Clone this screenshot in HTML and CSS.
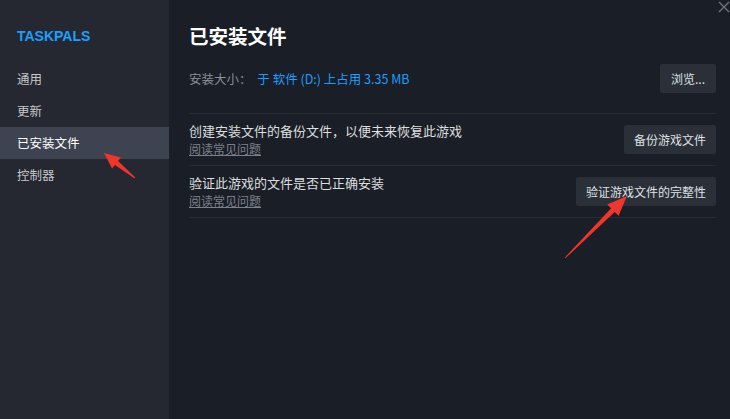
FILE: index.html
```html
<!DOCTYPE html>
<html lang="zh-CN">

<head>
	<meta charset="UTF-8">
	<meta name="viewport" content="width=device-width, initial-scale=1.0">
	<title>TASKPALS 属性</title>
	<link rel="stylesheet" href="styles.css">
</head>

<body>
	<div class="window">
		<aside class="sidebar">
			<div class="game-title">TASKPALS</div>
			<ul class="menu">
				<li>通用</li>
				<li>更新</li>
				<li class="active">已安装文件</li>
				<li>控制器</li>
			</ul>
		</aside>

		<main class="content">
			<h1 class="page-title">已安装文件</h1>

			<div class="size-row">
				<div class="size-info">
					<span class="label">安装大小：</span>
					<span class="value">于 软件 (D:) 上占用 3.35 MB</span>
				</div>
				<button class="btn">浏览...</button>
			</div>

			<div class="option-row">
				<div class="option-text">
					<p>创建安装文件的备份文件，以便未来恢复此游戏</p>
					<a href="#">阅读常见问题</a>
				</div>
				<button class="btn">备份游戏文件</button>
			</div>

			<div class="option-row">
				<div class="option-text">
					<p>验证此游戏的文件是否已正确安装</p>
					<a href="#">阅读常见问题</a>
				</div>
				<button class="btn">验证游戏文件的完整性</button>
			</div>
		</main>
	</div>

	<svg class="close" width="12" height="12" viewBox="0 0 12 12">
		<path d="M1 1 L11 11 M11 1 L1 11" stroke="#6d737d" stroke-width="1.4" fill="none" />
	</svg>

	<!-- annotation arrows -->
	<svg class="arrows" width="730" height="419" viewBox="0 0 730 419">
		<polygon fill="#f0352b"
			points="104,153 120.9,157.6 118.1,161.1 135.3,177.6 134.7,178.4 114.9,164.9 112.1,168.5" />
		<polygon fill="#f0352b"
			points="627,196 607.2,204.4 611.1,208.3 564.65,257.65 565.35,258.35 614.7,211.9 618.6,215.8" />
	</svg>
</body>

</html>
```

FILE: styles.css
```css
body {
	font-family: "Noto Sans CJK SC", "Noto Sans", sans-serif;
	margin: 0;
	padding: 0;
	background-color: #1a1e26;
	color: #dcdedf;
	width: 730px;
	height: 419px;
	overflow: hidden;
	position: relative;
}

.window {
	display: flex;
	height: 419px;
}

.sidebar {
	width: 169px;
	flex-shrink: 0;
	background-color: #252830;
	padding-top: 26px;
}

.game-title {
	font-family: "Liberation Sans", "Noto Sans", sans-serif;
	font-weight: bold;
	font-size: 14px;
	line-height: 20px;
	color: #1a9fff;
	padding-left: 17px;
	margin-bottom: 17px;
}

.menu {
	list-style: none;
	margin: 0;
	padding: 0;
}

.menu li {
	height: 32px;
	line-height: 32px;
	padding-left: 17px;
	font-size: 12.5px;
	color: #c4c7cc;
}

.menu li.active {
	background-color: #3d4350;
	color: #ffffff;
}

.content {
	flex: 1;
	padding: 22px 14px 0 20px;
}

.page-title {
	margin: 0 0 14px;
	font-size: 19.5px;
	line-height: 28px;
	font-weight: bold;
	color: #ffffff;
}

.size-row {
	display: flex;
	justify-content: space-between;
	align-items: center;
	height: 29px;
	margin-bottom: 20px;
}

.size-info {
	font-size: 12.5px;
	line-height: 17px;
}

.size-info .label {
	color: #8b9099;
	margin-right: 3px;
}

.size-info .value {
	color: #1a9fff;
}

.btn {
	font-family: inherit;
	font-size: 12px;
	height: 29px;
	padding: 0 10px;
	border: none;
	border-radius: 2px;
	background-color: #2b2f38;
	color: #dfe1e4;
}

.size-row .btn {
	padding: 0 11px;
}

.option-row {
	display: flex;
	justify-content: space-between;
	align-items: center;
	height: 29px;
	padding: 11px 0;
	border-top: 1px solid #272b33;
}

.option-row:last-child {
	border-bottom: 1px solid #272b33;
}

.option-text p {
	margin: 0;
	font-size: 13px;
	line-height: 16px;
	height: 16px;
	color: #dcdedf;
}

.option-text a {
	display: block;
	margin-top: 1px;
	font-size: 12px;
	line-height: 17px;
	height: 17px;
	color: #7b818b;
}

.close {
	position: absolute;
	top: 1px;
	right: 0;
}

.arrows {
	position: absolute;
	top: 0;
	left: 0;
	pointer-events: none;
}
```
